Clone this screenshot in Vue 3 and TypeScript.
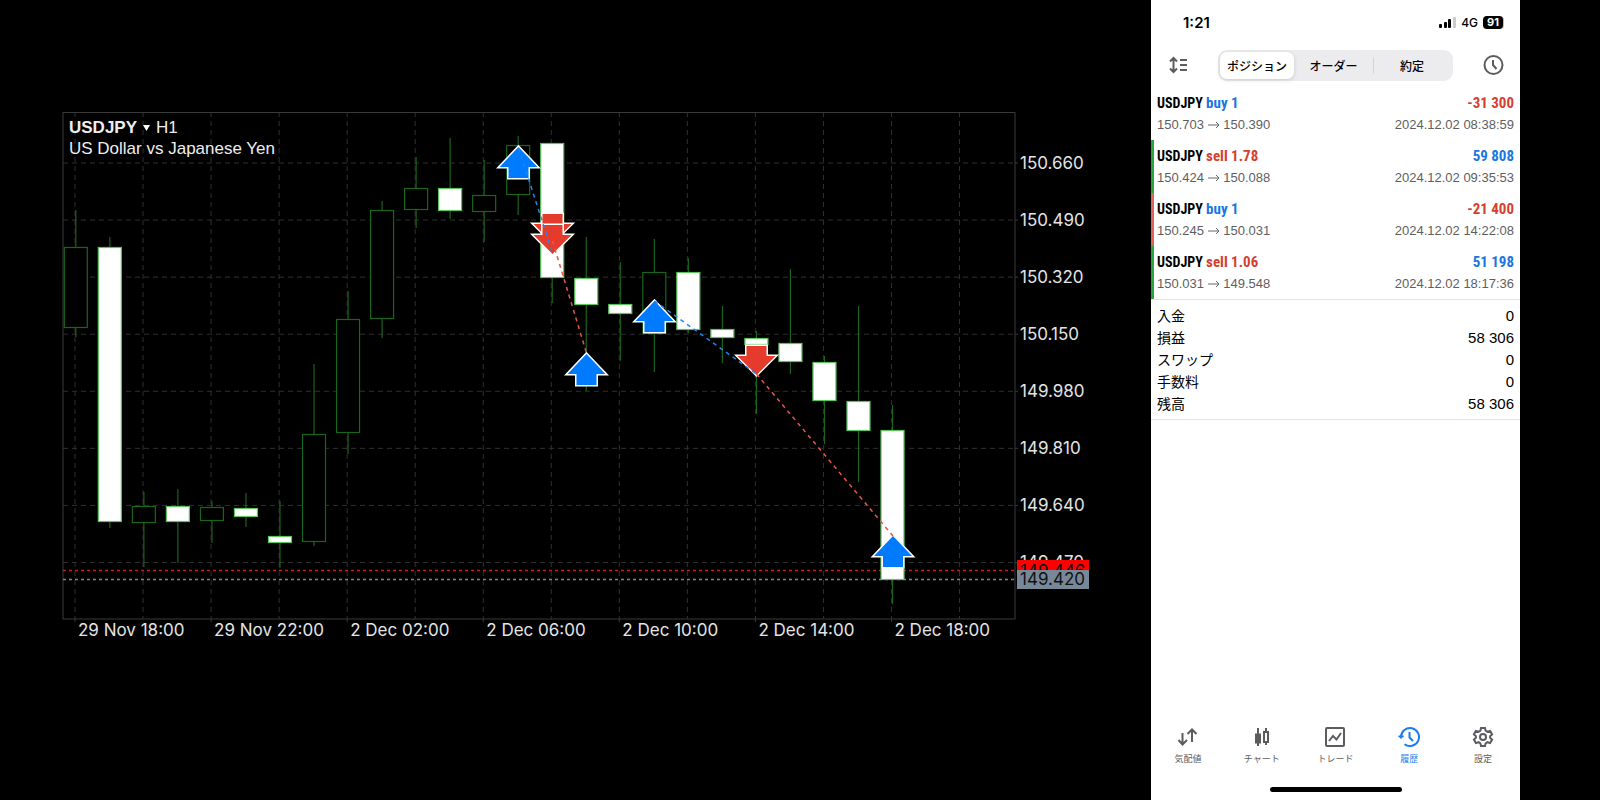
<script setup lang="ts">
import { computed, ref } from 'vue'

interface Candle {
  high: number
  low: number
  top: number
  bottom: number
  filled: boolean
}

interface Deal {
  side: 'buy' | 'sell'
  volume: string
  from: string
  to: string
  profit: string
  time: string
  mark: 'none' | 'gain' | 'loss'
}

type TabIcon = 'quotes' | 'chart' | 'trade' | 'history' | 'settings'

const frame = { left: 63, right: 1015, top: 112, bottom: 619 }
const gridStep = 68.04
const rowStep = 57.07
const candleStep = 34.03

const columns = Array.from({ length: 14 }, (_, i) => 75 + i * gridStep)
const prices = ['150.660', '150.490', '150.320', '150.150', '149.980', '149.810', '149.640', '149.470']
const rows = prices.map((label, i) => ({ label, y: 163 + i * rowStep }))
const dates = [
  '29 Nov 18:00', '29 Nov 22:00', '2 Dec 02:00', '2 Dec 06:00',
  '2 Dec 10:00', '2 Dec 14:00', '2 Dec 18:00',
].map((label, i) => ({ label, x: 75 + i * gridStep * 2 }))

const series: [number, number, number, number, boolean][] = [
  [210, 337, 247, 327, false],
  [237, 528, 247, 521, true],
  [492, 567, 506, 522, false],
  [489, 563, 506, 521, true],
  [501, 543, 507, 520, false],
  [493, 527, 508, 516, true],
  [501, 568, 536, 542, true],
  [364, 546, 434, 541, false],
  [291, 454, 319, 432, false],
  [201, 338, 210, 318, false],
  [157, 228, 188, 209, false],
  [138, 219, 188, 210, true],
  [160, 242, 195, 211, false],
  [136, 215, 145, 194, false],
  [143, 303, 143, 277, true],
  [237, 391, 278, 304, true],
  [262, 361, 304, 313, true],
  [239, 372, 272, 333, false],
  [258, 333, 272, 329, true],
  [306, 363, 329, 337, true],
  [331, 414, 338, 344, true],
  [269, 374, 343, 361, true],
  [356, 444, 362, 400, true],
  [306, 482, 401, 430, true],
  [405, 604, 430, 579, true],
]

const candles = computed(() =>
  series.map(([high, low, top, bottom, filled], i): Candle & { x: number } => ({
    high, low, top, bottom, filled, x: 75.8 + i * candleStep,
  })),
)

const upArrow = 'M0 1 L19 21 H10 V32 H-10 V21 H-19 Z'
const downArrow = 'M0 -1 L19 -20 H10 V-30 H-10 V-20 H-19 Z'
const markers = [
  { x: 518.5, y: 146, up: true },
  { x: 552.5, y: 244, up: false },
  { x: 552.5, y: 255, up: false },
  { x: 586.5, y: 353, up: true },
  { x: 654.5, y: 300, up: true },
  { x: 756.5, y: 376, up: false },
  { x: 893, y: 535, up: true },
]
const links = [
  { x1: 518.5, y1: 148, x2: 552.5, y2: 253, buy: true },
  { x1: 552.5, y1: 241, x2: 586.5, y2: 353, buy: false },
  { x1: 654.5, y1: 301, x2: 756.5, y2: 374, buy: true },
  { x1: 756.5, y1: 374, x2: 893, y2: 536, buy: false },
]

const segments = ['ポジション', 'オーダー', '約定']
const activeSegment = ref(0)

const deals: Deal[] = [
  { side: 'buy', volume: '1', from: '150.703', to: '150.390', profit: '-31 300', time: '2024.12.02 08:38:59', mark: 'none' },
  { side: 'sell', volume: '1.78', from: '150.424', to: '150.088', profit: '59 808', time: '2024.12.02 09:35:53', mark: 'gain' },
  { side: 'buy', volume: '1', from: '150.245', to: '150.031', profit: '-21 400', time: '2024.12.02 14:22:08', mark: 'loss' },
  { side: 'sell', volume: '1.06', from: '150.031', to: '149.548', profit: '51 198', time: '2024.12.02 18:17:36', mark: 'gain' },
]

const summary = [
  { label: '入金', value: '0' },
  { label: '損益', value: '58 306' },
  { label: 'スワップ', value: '0' },
  { label: '手数料', value: '0' },
  { label: '残高', value: '58 306' },
]

const tabs: { icon: TabIcon; label: string }[] = [
  { icon: 'quotes', label: '気配値' },
  { icon: 'chart', label: 'チャート' },
  { icon: 'trade', label: 'トレード' },
  { icon: 'history', label: '履歴' },
  { icon: 'settings', label: '設定' },
]
const activeTab = ref<TabIcon>('history')
</script>

<template>
  <main class="page">
    <section class="chart">
      <header class="chart-title">
        <button type="button" class="symbol"><b>USDJPY</b> <svg class="caret" viewBox="0 0 8 8" aria-hidden="true"><path d="M0 1H8L4 8Z" /></svg> H1</button>
        <p>US Dollar vs Japanese Yen</p>
      </header>

      <svg class="plot" viewBox="60 110 1040 530" role="img" aria-label="USDJPY H1">
        <g class="grid">
          <line v-for="x in columns" :key="'c' + x" :x1="x" :x2="x" :y1="frame.top" :y2="frame.bottom" />
          <line v-for="row in rows" :key="row.label" :x1="frame.left" :x2="frame.right" :y1="row.y" :y2="row.y" />
        </g>
        <g class="frame">
          <rect :x="frame.left" :y="frame.top + 0.5" :width="frame.right - frame.left" :height="frame.bottom - frame.top - 0.5" />
          <line v-for="d in dates" :key="d.label" :x1="d.x" :x2="d.x" :y1="frame.bottom" :y2="frame.bottom + 3" />
          <line v-for="row in rows" :key="row.label" :x1="frame.right" :x2="frame.right + 3" :y1="row.y" :y2="row.y" />
        </g>

        <line class="ask" x1="63" x2="1015" y1="570.5" y2="570.5" />
        <line class="bid" x1="63" x2="1015" y1="579.5" y2="579.5" />

        <g v-for="c in candles" :key="c.x" class="candle" :class="{ filled: c.filled }">
          <line :x1="c.x" :x2="c.x" :y1="c.high" :y2="c.top" />
          <line :x1="c.x" :x2="c.x" :y1="c.bottom" :y2="c.low" />
          <rect :x="c.x - 11.5" :y="c.top + 0.5" width="23" :height="c.bottom - c.top" />
        </g>

        <path
          v-for="m in markers"
          :key="m.x + '-' + m.y"
          class="marker"
          :class="m.up ? 'up' : 'down'"
          :d="m.up ? upArrow : downArrow"
          :transform="`translate(${m.x} ${m.y})`"
        />
        <line
          v-for="l in links"
          :key="l.x1 + '-' + l.y1"
          class="link"
          :class="l.buy ? 'buy' : 'sell'"
          :x1="l.x1" :y1="l.y1" :x2="l.x2" :y2="l.y2"
        />

        <g class="labels">
          <text v-for="row in rows" :key="row.label" x="1020" :y="row.y + 6">{{ row.label }}</text>
          <text v-for="d in dates" :key="d.label" :x="d.x + 3" y="636">{{ d.label }}</text>
        </g>
        <g class="tags">
          <rect class="ask-tag" x="1017" y="560" width="72" height="20" />
          <text x="1020" y="577">149.446</text>
          <rect class="bid-tag" x="1017" y="570" width="72" height="19" />
          <text x="1020" y="585">149.420</text>
        </g>
      </svg>
    </section>

    <section class="phone">
      <div class="status">
        <time>1:21</time>
        <div class="signals">
          <svg class="bars" viewBox="0 0 17 11" aria-hidden="true">
            <rect x="0" y="7" width="3" height="4" rx="1" />
            <rect x="5" y="5" width="3" height="6" rx="1" />
            <rect x="9" y="2" width="3" height="9" rx="1" />
            <rect class="dim" x="14" y="0" width="3" height="11" rx="1" />
          </svg>
          <span>4G</span>
          <span class="battery">91</span>
        </div>
      </div>

      <header class="toolbar">
        <button type="button" class="icon-button" aria-label="並べ替え">
          <svg viewBox="0 0 24 24" aria-hidden="true">
            <path d="M7.500 5V19M4 8.500L7.500 5L11 8.500M4 15.500L7.500 19L11 15.500M14 7H21M14 12H21M14 17H21" />
          </svg>
        </button>
        <div class="segments">
          <button
            v-for="(s, i) in segments"
            :key="s"
            type="button"
            :class="{ active: i === activeSegment }"
            :aria-pressed="i === activeSegment"
            @click="activeSegment = i"
          >{{ s }}</button>
        </div>
        <button type="button" class="icon-button" aria-label="期間">
          <svg viewBox="0 0 24 24" aria-hidden="true">
            <circle cx="12.500" cy="12" r="9" /><path d="M12 7V12L15.500 16" />
          </svg>
        </button>
      </header>

      <ul class="deals">
        <li v-for="d in deals" :key="d.time" :class="d.mark">
          <div class="line head">
            <span class="name">USDJPY <em :class="d.side">{{ d.side }} {{ d.volume }}</em></span>
            <span :class="d.profit.startsWith('-') ? 'sell' : 'buy'">{{ d.profit }}</span>
          </div>
          <div class="line detail">
            <span class="move">{{ d.from }}
              <svg viewBox="0 0 12 8" aria-hidden="true"><path d="M0 4H11M8 1L11 4L8 7" /></svg>
              {{ d.to }}</span>
            <time>{{ d.time }}</time>
          </div>
        </li>
      </ul>

      <dl class="summary">
        <div v-for="s in summary" :key="s.label">
          <dt>{{ s.label }}</dt>
          <dd>{{ s.value }}</dd>
        </div>
      </dl>

      <nav class="tabs">
        <a
          v-for="t in tabs"
          :key="t.icon"
          :href="'#' + t.icon"
          :class="{ active: t.icon === activeTab }"
          @click="activeTab = t.icon"
        >
          <svg viewBox="0 0 24 24" aria-hidden="true">
            <path v-if="t.icon === 'quotes'" d="M6.500 8V19M2.500 15L6.500 19.500L11 15M16 17V5M11.500 9L16 4.500L20.500 9" />
            <template v-else-if="t.icon === 'chart'">
              <path d="M8 3V21M16 3V7M16 17V20" />
              <rect class="solid" x="5.500" y="9" width="5" height="9" />
              <rect x="14" y="7" width="4" height="10" />
            </template>
            <template v-else-if="t.icon === 'trade'">
              <rect x="3" y="3" width="18" height="18" rx="1" />
              <path d="M6 16L10 11L13.500 14.500L18 8" />
            </template>
            <template v-else-if="t.icon === 'history'">
              <path d="M4 12A9 9 0 1 1 7.500 19.200M12.500 7V12.500L16 16" />
              <path class="solid" d="M1.500 11H6.500L4 13.500Z" />
            </template>
            <template v-else>
              <path d="M10 3H14L14.600 5.700L16.500 6.800L19.100 5.900L21.100 9.400L19.100 11.200V12.800L21.100 14.600L19.100 18.100L16.500 17.200L14.600 18.300L14 21H10L9.400 18.300L7.500 17.200L4.900 18.100L2.900 14.600L4.900 12.800V11.200L2.900 9.400L4.900 5.900L7.500 6.800L9.400 5.700Z" />
              <circle cx="12" cy="12" r="3" />
            </template>
          </svg>
          <span>{{ t.label }}</span>
        </a>
      </nav>
      <div class="home-bar"></div>
    </section>
  </main>
</template>

<style>
body {
  margin: 0;
  background: #000;
}
</style>

<style scoped>
.page {
  display: grid;
  grid-template-columns: minmax(0, 1fr) 369px;
  min-height: 100vh;
  box-sizing: border-box;
  padding-right: 5%;
  background: #000;
  font-family: "Liberation Sans", "Noto Sans CJK JP", sans-serif;
}

button {
  margin: 0;
  padding: 0;
  border: 0;
  background: none;
  color: inherit;
  font: inherit;
  cursor: pointer;
}

/* Chart */
.chart {
  position: relative;
  padding: 110px 51px 0 60px;
}

.plot {
  display: block;
  width: 100%;
  height: auto;
}

.chart-title {
  position: absolute;
  top: 117px;
  left: 69px;
  color: #eee;
  font-size: 17px;
  line-height: 21px;
}

.chart-title p {
  margin: 0;
}

.symbol {
  display: flex;
  align-items: center;
  gap: 6px;
}

.caret {
  width: 7px;
  height: 7px;
  fill: #fff;
}

.grid line {
  stroke: #303030;
  stroke-width: 1;
  stroke-dasharray: 5 4;
}

.frame rect,
.frame line {
  fill: none;
  stroke: #3a3a3a;
  stroke-width: 1;
}

.ask,
.bid {
  stroke: #d01818;
  stroke-width: 1.5;
  stroke-dasharray: 3 3;
}

.bid {
  stroke: #778899;
}

.candle line,
.candle rect {
  fill: #000;
  stroke: #196519;
  stroke-width: 1.2;
}

.candle.filled rect {
  fill: #fff;
  stroke: #5cc45c;
}

.marker {
  stroke: #fff;
  stroke-width: 3;
  stroke-miterlimit: 8;
  paint-order: stroke;
}

.marker.up {
  fill: #007aff;
}

.marker.down {
  fill: #e53b2c;
}

.link {
  stroke-width: 1.5;
  stroke-dasharray: 4 4;
}

.link.buy {
  stroke: #1f86ee;
}

.link.sell {
  stroke: #ea5545;
}

.labels text,
.tags text {
  fill: #e4e4e4;
  font-family: Inter, sans-serif;
  font-size: 17px;
}

.tags text {
  fill: #111;
}

.ask-tag {
  fill: #f00;
}

.bid-tag {
  fill: #778899;
}

/* Phone */
.phone {
  display: flex;
  flex-direction: column;
  background: #fff;
  color: #000;
}

.status {
  display: flex;
  justify-content: space-between;
  align-items: center;
  height: 45px;
  padding: 0 17px 0 32px;
  font-family: Inter, sans-serif;
  font-size: 15px;
  font-weight: 600;
}

.signals {
  display: flex;
  align-items: center;
  gap: 5px;
  font-size: 12px;
  font-weight: 500;
}

.bars {
  width: 17px;
  height: 11px;
}

.bars .dim {
  fill: #ccc;
}

.battery {
  width: 20px;
  border-radius: 4px;
  background: #000;
  box-shadow: 1px 0 0 #bbb;
  color: #fff;
  font-size: 11px;
  font-weight: 700;
  line-height: 13px;
  text-align: center;
}

.toolbar {
  display: flex;
  justify-content: space-between;
  align-items: center;
  height: 40px;
  padding: 0 15px;
  margin-bottom: 2px;
}

.icon-button svg {
  display: block;
  width: 24px;
  height: 24px;
  fill: none;
  stroke: #5c5c60;
  stroke-width: 2;
}

.segments {
  display: grid;
  grid-template-columns: 74fr 79fr 78fr;
  width: 231px;
  padding: 2px;
  border-radius: 9px;
  background: #ececef;
}

.segments button {
  height: 27px;
  border-radius: 7px;
  font-family: "Noto Sans CJK JP", sans-serif;
  font-size: 12px;
  font-weight: 500;
  line-height: 27px;
}

.segments button.active {
  background: #fff;
  box-shadow: 0 1px 4px rgba(0, 0, 0, 0.15);
}

.segments button:last-child {
  background: linear-gradient(#d4d4d8, #d4d4d8) left center / 1px 17px no-repeat;
}

.deals {
  margin: 0;
  padding: 0;
  list-style: none;
  border-bottom: 1px solid #e4e4e6;
}

.deals li {
  height: 53px;
  box-sizing: border-box;
  padding: 4px 6px 0 3px;
  border-left: 3px solid transparent;
}

.deals li.gain {
  border-color: #27a83c;
}

.deals li.loss {
  border-color: #e0635c;
}

.line {
  display: flex;
  justify-content: space-between;
}

.head {
  font-family: "Roboto Condensed", Roboto, sans-serif;
  font-size: 15px;
  font-weight: 700;
  line-height: 24px;
}

.name {
  font-size: 14px;
}

.head em {
  font-size: 15px;
  font-style: normal;
}

.buy {
  color: #1a76e0;
}

.sell {
  color: #d4402f;
}

.detail {
  color: #5e5e62;
  font-size: 13px;
  line-height: 20px;
}

.move svg {
  width: 12px;
  height: 8px;
  fill: none;
  stroke: #66666a;
  stroke-width: 1;
}

.summary {
  margin: 0;
  padding: 5px 6px 4px;
  border-bottom: 1px solid #e4e4e6;
  font-size: 15px;
  line-height: 22px;
}

.summary div {
  display: flex;
  justify-content: space-between;
  height: 22px;
}

.summary dt {
  font-family: "Noto Sans CJK JP", sans-serif;
  font-size: 14px;
  line-height: 20px;
}

.summary dd {
  margin: 0;
}

.tabs {
  display: grid;
  grid-template-columns: repeat(5, 1fr);
  margin-top: auto;
  padding-bottom: 21px;
}

.tabs a {
  display: flex;
  flex-direction: column;
  align-items: center;
  gap: 3px;
  color: #5c5c60;
  font-family: "Noto Sans CJK JP", sans-serif;
  font-size: 9px;
  line-height: 14px;
  text-decoration: none;
}

.tabs a.active {
  color: #1a7cf0;
}

.tabs svg {
  width: 24px;
  height: 24px;
  fill: none;
  stroke: currentColor;
  stroke-width: 2;
}

.tabs .solid {
  fill: currentColor;
  stroke-width: 1;
}

.home-bar {
  width: 132px;
  height: 5px;
  margin: 0 auto 8px;
  border-radius: 3px;
  background: #000;
}
</style>
